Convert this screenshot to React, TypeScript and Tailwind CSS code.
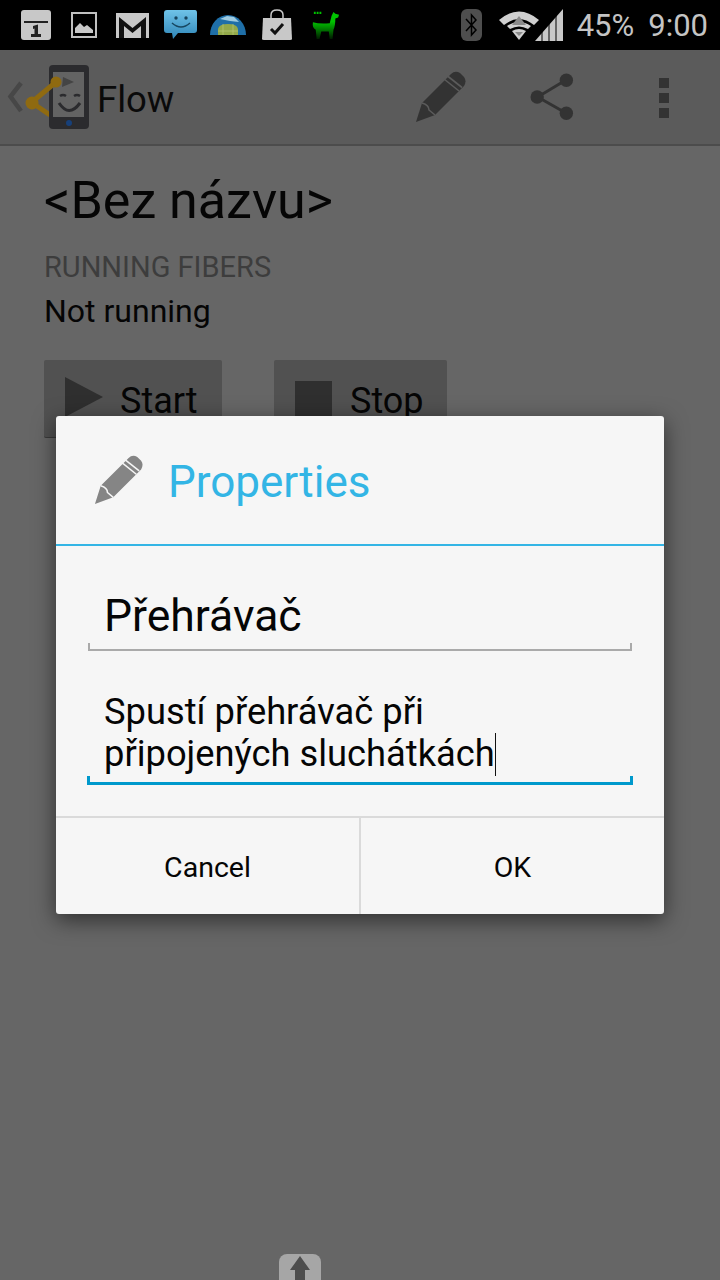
const font = { fontFamily: "Roboto, sans-serif" };

function PencilIcon({ className, fill, cut }: { className: string; fill: string; cut: string }) {
  return (
    <svg viewBox="0 0 52 52" className={className}>
      <path d="M1 51 L7 32 L36 3 Q40 -1 45 2 L49 6 Q52 10 49 15 L20 44 Z" fill={fill} />
      <g stroke={cut} strokeWidth="1.6" fill="none">
        <path d="M29 8 L44 20" />
        <path d="M32.500 5 L47 16.500" />
        <path d="M7 32 Q14 34 14 39 L20 44" />
      </g>
    </svg>
  );
}

function StatusIcons() {
  return (
    <div className="flex items-center">
      <svg viewBox="0 0 30 30" className="ml-[21px] w-[30px] h-[30px]">
        <rect x="0" y="0" width="30" height="30" rx="3" fill="#c8c8c8" />
        <rect x="3" y="11" width="24" height="2" fill="#222" />
        <path d="M12 16 L17 14.500 L17 24 L20 24 L20 27 L10 27 L10 24 L13.500 24 L13.500 18.500 L12 19 Z" fill="#222" />
      </svg>
      <svg viewBox="0 0 26 26" className="ml-[20px] w-[26px] h-[26px]">
        <rect x="1" y="1" width="24" height="24" fill="none" stroke="#c0c0c0" strokeWidth="2" />
        <path d="M4 21 V16 L9 11 L13 15 L16 13 L22 18 V21 Z" fill="#c8c8c8" />
      </svg>
      <svg viewBox="0 0 33 25" className="ml-[19px] w-[33px] h-[25px]">
        <rect width="33" height="25" fill="#c8c8c8" />
        <path d="M3 25 V4 L16.500 15 L30 4 V25 H25 V13 L16.500 20 L8 13 V25 Z" fill="#111" />
      </svg>
      <svg viewBox="0 0 34 30" className="ml-[15px] w-[34px] h-[30px]">
        <defs>
          <linearGradient id="sms" x1="0" y1="0" x2="0" y2="1">
            <stop offset="0" stopColor="#6fc3e8" />
            <stop offset="1" stopColor="#2f86b8" />
          </linearGradient>
        </defs>
        <path d="M3 0 H31 Q33 0 33 3 V20 Q33 23 30 23 H14 L9 29 L8 23 H3 Q0 23 0 20 V3 Q0 0 3 0 Z" fill="url(#sms)" />
        <circle cx="12" cy="8" r="1.700" fill="#17465f" />
        <circle cx="22" cy="8" r="1.700" fill="#17465f" />
        <path d="M8 13 Q17 21 26 13" stroke="#17465f" strokeWidth="1.500" fill="none" />
      </svg>
      <svg viewBox="0 0 36 22" className="ml-[12px] w-[36px] h-[22px]">
        <path d="M0 21 A18 20 0 0 1 36 21 Z" fill="#1f6fa8" />
        <path d="M8 21 V15 Q9 10 18 10 Q27 10 28 15 V21 Z" fill="#93a94a" />
        <path d="M8 17 H28 M13 21 V10 M23 21 V10" stroke="#b9c97a" strokeWidth="0.700" />
        <path d="M10 5 L17 2 L24 3 L29 8 L20 7 Z" fill="#9fcbe0" />
      </svg>
      <svg viewBox="0 0 32 32" className="ml-[15px] w-[32px] h-[32px]">
        <path d="M10 9 V6 Q10 1 16 1 Q22 1 22 6 V9" stroke="#c8c8c8" strokeWidth="1.500" fill="none" />
        <path d="M2 9 H30 L31 30 Q31 31 29 31 H3 Q1 31 1 30 Z" fill="#c8c8c8" />
        <path d="M10 20 L14 24 L22 15" stroke="#111" strokeWidth="3" fill="none" />
      </svg>
      <svg viewBox="0 0 30 30" className="ml-[19px] w-[28px] h-[28px]">
        <defs>
          <linearGradient id="llama" x1="0" y1="0" x2="0" y2="1">
            <stop offset="0.350" stopColor="#00c400" />
            <stop offset="1" stopColor="#001c00" />
          </linearGradient>
        </defs>
        <path d="M23 1 L25 3 L29 4 L28 7 L25 8 Q25 16 23 20 L22 30 L19 30 L18 22 L10 22 L8 30 L5 30 L4 20 Q0 18 1 12 Q8 14 19 13 L21 5 Z" fill="url(#llama)" />
        <path d="M2 2 H11" stroke="#00c400" strokeWidth="2.500" strokeDasharray="2 1" />
      </svg>
    </div>
  );
}

function StatusRight() {
  return (
    <div className="flex items-center">
      <svg viewBox="0 0 21 32" className="mr-[17px] w-[21px] h-[32px]">
        <rect width="21" height="32" rx="6" fill="#4e4e4e" />
        <path d="M5 10 L15 21 L10.500 26 V6 L15 11 L5 22" stroke="#000" strokeWidth="1.500" fill="none" />
      </svg>
      <svg viewBox="0 0 40 30" className="w-[40px] h-[30px]">
        <path d="M0 10 Q20 -7 40 10 L35 15 Q20 3 5 15 Z" fill="#d0d0d0" />
        <path d="M8 16 Q20 8 32 16 L29 19 Q20 14 11 19 Z" fill="#d0d0d0" />
        <path d="M20 6 L27 15 H13 Z" fill="#8a8a8a" />
        <path d="M13 21 Q20 17 27 21 L20 30 Z" fill="#d0d0d0" />
        <path d="M16 22 H24 L20 26 Z" fill="#8a8a8a" />
      </svg>
      <svg viewBox="0 0 28 32" className="-ml-[4px] mr-[14px] w-[28px] h-[32px]">
        <path d="M0 32 L28 0 V32 Z" fill="#c8c8c8" />
        <path d="M7 32 V20 M14 32 V14 M21 32 V6" stroke="#000" strokeWidth="1" />
      </svg>
      <span className="text-[#c4c4c4] text-[31px] leading-none" style={font}>45%</span>
      <span className="ml-[14px] mr-[12px] text-[#c4c4c4] text-[31px] leading-none" style={font}>9:00</span>
    </div>
  );
}

function ActionBar() {
  return (
    <div className="h-[96px] bg-[#5b5b5b] border-b-2 border-[#4c4c4c] flex items-center justify-between">
      <div className="flex items-center">
        <svg viewBox="0 0 98 96" className="w-[98px] h-[96px] shrink-0">
          <path d="M21 34 L10.500 47.500 L21 62" stroke="#474747" strokeWidth="4.500" fill="none" />
          <path d="M31 53 L50 66" stroke="#8f6a10" strokeWidth="5" />
          <rect x="49" y="16" width="40" height="64" rx="4" fill="#2b2b2e" />
          <rect x="53" y="23" width="31" height="45" fill="#636363" />
          <path d="M32 53 L56 33" stroke="#8f6a10" strokeWidth="5" />
          <circle cx="56" cy="33" r="5.500" fill="#8f6a10" />
          <circle cx="32" cy="54" r="6.500" fill="#8f6a10" />
          <path d="M63 28 L74 33 L62 38 Z" fill="#444" />
          <path d="M59 54 Q69 69 80 54" stroke="#2b2b2e" strokeWidth="3" fill="none" />
          <path d="M60 47 Q63 45 66 47 M74 47 Q77 45 80 47" stroke="#2b2b2e" strokeWidth="2.500" fill="none" />
          <circle cx="69" cy="74" r="3" fill="#17407a" />
        </svg>
        <span className="-ml-px mt-[6px] text-[#0a0a0a] text-[36.500px] leading-none" style={font}>Flow</span>
      </div>
      <div className="flex items-center">
        <PencilIcon className="w-[52px] h-[52px]" fill="#333333" cut="#5b5b5b" />
        <svg viewBox="0 0 46 50" className="ml-[63px] w-[44px] h-[48px]">
          <path d="M8 25 L38 7 M8 25 L38 42" stroke="#333" strokeWidth="3" />
          <circle cx="7.500" cy="25" r="7" fill="#333" />
          <circle cx="38" cy="7.500" r="7" fill="#333" />
          <circle cx="38" cy="42" r="7" fill="#333" />
        </svg>
        <div className="ml-[85px] mr-[51px] mt-[2px] flex flex-col gap-[5px]">
          <div className="w-[10px] h-[10px] bg-[#333333]" />
          <div className="w-[10px] h-[10px] bg-[#333333]" />
          <div className="w-[10px] h-[10px] bg-[#333333]" />
        </div>
      </div>
    </div>
  );
}

function Background() {
  return (
    <div className="px-[44px]" style={font}>
      <h1 className="pt-[27px] text-[52px] leading-[56px] text-[#050505]">&lt;Bez názvu&gt;</h1>
      <p className="mt-[23px] text-[29px] leading-[30px] text-[#3d3d3d]">RUNNING FIBERS</p>
      <p className="mt-[11px] text-[32px] leading-[36px] text-[#050505]">Not running</p>
      <div className="mt-[31px] flex gap-[52px]">
        <div className="w-[178px] h-[78px] rounded-[2px] bg-[#515151] border-b border-[#3a3a3a] flex items-start pt-[17px] pl-[21px]">
          <svg viewBox="0 0 38 40" className="w-[38px] h-[40px]">
            <path d="M0 0 L38 20 L0 40 Z" fill="#2f2f2f" />
          </svg>
          <span className="ml-[17px] mt-px text-[36px] leading-[46px] text-[#050505]">Start</span>
        </div>
        <div className="w-[173px] h-[78px] rounded-[2px] bg-[#515151] flex items-start pt-[21px] pl-[21px]">
          <div className="w-[37px] h-[37px] bg-[#2f2f2f]" />
          <span className="ml-[18px] -mt-[3px] text-[36px] leading-[46px] text-[#050505]">Stop</span>
        </div>
      </div>
    </div>
  );
}

function Dialog() {
  return (
    <div
      className="absolute left-[56px] top-[416px] w-[608px] h-[498px] rounded-[3px] bg-[#f6f6f6] shadow-[0_6px_22px_rgba(0,0,0,0.55)] flex flex-col"
      style={font}
    >
      <div className="h-[130px] border-b-2 border-[#33b5e5] flex items-center pl-[38px] shrink-0">
        <PencilIcon className="w-[50px] h-[50px]" fill="#858585" cut="#f6f6f6" />
        <span className="ml-[24px] mt-[3px] text-[44px] leading-none text-[#33b5e5]">Properties</span>
      </div>
      <div className="px-[32px] pt-[44px] shrink-0">
        <div className="h-[53px] pl-[16px] text-[44.500px] leading-[52px] text-[#050505]">Přehrávač</div>
        <div className="h-[8px] border-b-2 border-x-2 border-[#aaaaaa]" />
        <div className="mt-[40px] pl-[16px] text-[36.300px] leading-[42px] text-[#050505]">
          <p>Spustí přehrávač při</p>
          <p className="flex items-start">
            připojených sluchátkách
            <span className="inline-block w-px h-[43px] bg-[#111111]" />
          </p>
        </div>
        <div className="-mx-px h-[9px] border-b-[3px] border-x-[3px] border-[#0099cc]" />
      </div>
      <div className="mt-auto h-[98px] border-t-2 border-[#dadada] flex shrink-0">
        <div className="w-[305px] border-r-2 border-[#dadada] flex items-center justify-center pt-[4px] text-[28.500px] text-[#050505]">Cancel</div>
        <div className="flex-1 flex items-center justify-center pt-[4px] text-[28.500px] text-[#050505]">OK</div>
      </div>
    </div>
  );
}

export default function App() {
  return (
    <div className="relative w-[720px] h-[1280px] overflow-hidden bg-[#666666]">
      <div className="h-[50px] bg-black flex items-center justify-between">
        <StatusIcons />
        <StatusRight />
      </div>
      <ActionBar />
      <Background />
      <Dialog />
      <div className="absolute left-[279px] top-[1254px] w-[42px] h-[26px] rounded-t-[8px] bg-[#a6a6a6] flex justify-center pt-[2px]">
        <svg viewBox="0 0 22 24" className="w-[22px] h-[24px]">
          <path d="M11 0 L21 14 H16 V24 H6 V14 H1 Z" fill="#4d4d4d" />
        </svg>
      </div>
    </div>
  );
}
